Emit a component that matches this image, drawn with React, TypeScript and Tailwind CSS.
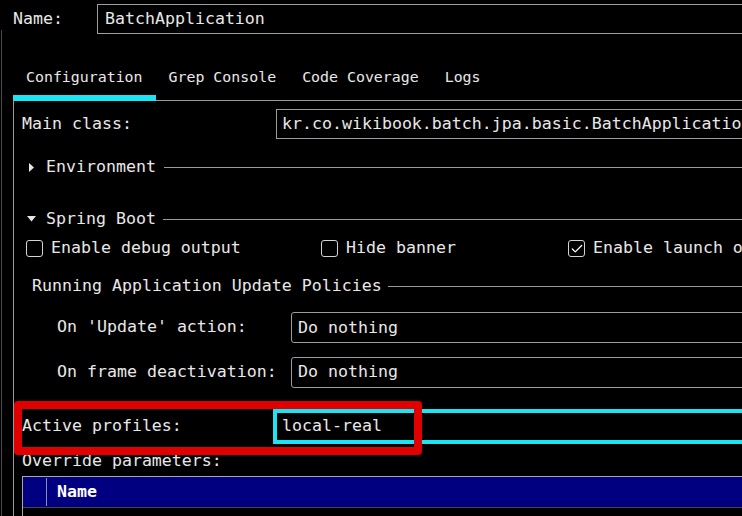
import { Check } from 'lucide-react';

const mono = "font-['DejaVu_Sans_Mono','Liberation_Mono',monospace]";

function Field({ value, className }: { value: string; className: string }) {
    return (
        <div className={`-mr-[10px] flex flex-1 items-center ${className}`}>
            <span className="whitespace-nowrap">{value}</span>
        </div>
    );
}

function CheckBox({ label, checked }: { label: string; checked?: boolean }) {
    return (
        <div className="flex items-center">
            <div className="flex h-[17px] w-[17px] items-center justify-center rounded-[3px] border-[1.5px] border-[#d4d4d4]">
                {checked && <Check className="size-[14px] text-white" strokeWidth={2.2} />}
            </div>
            <span className="ml-[8px] whitespace-nowrap">{label}</span>
        </div>
    );
}

function Section({ title, open, line = 'ml-[8px]' }: { title: string; open: boolean; line?: string }) {
    return (
        <div className="flex h-[20px] items-center pl-[8px]">
            <div className="flex w-[18px] justify-center">
                {open ? (
                    <svg width="9" height="6" viewBox="0 0 9 6">
                        <path d="M0 0H9L4.5 5.5Z" fill="#e6e6e6" />
                    </svg>
                ) : (
                    <svg width="5" height="9" viewBox="0 0 5 9">
                        <path d="M0 0V9L5 4.5Z" fill="#e6e6e6" />
                    </svg>
                )}
            </div>
            <span className="ml-[6px] whitespace-nowrap">{title}</span>
            <div className={`h-px flex-1 bg-[#9a9a9a] ${line}`} />
        </div>
    );
}

export default function App() {
    const tabs = ['Configuration', 'Grep Console', 'Code Coverage', 'Logs'];

    return (
        <div className={`relative flex h-[516px] w-[742px] flex-col overflow-hidden bg-black text-[16.6px] text-[#e8e8e8] ${mono}`}>
            {/* name */}
            <div className="flex h-[30px] shrink-0 items-start pt-[4px]">
                <div className="flex h-[30px] w-[97px] items-center pl-[13px]">Name:</div>
                <Field value="BatchApplication" className="h-[30px] border border-[#9d9d9d] pl-[7px]" />
            </div>

            <div className="ml-[1px] flex flex-1 flex-col border-l border-[#4a4a4a]">
                {/* tabs */}
                <div className="ml-[11px] flex h-[70px] shrink-0 items-end text-[14.9px]">
                    {tabs.map((t, i) => (
                        <div key={t} className="flex flex-col">
                            <div className="h-[20px] px-[13px] leading-[20px] whitespace-nowrap">{t}</div>
                            <div className={`relative mt-[8px] -mb-[1px] h-[6px] ${i === 0 ? 'bg-[#1be4f5]' : ''}`} />
                        </div>
                    ))}
                </div>

                {/* panel */}
                <div className="ml-[11px] flex flex-1 flex-col border-t border-l border-[#9a9a9a]">
                    <div className="mt-[8px] flex h-[30px] items-center pl-[8px]">
                        <div className="w-[254px] shrink-0">Main class:</div>
                        <Field
                            value="kr.co.wikibook.batch.jpa.basic.BatchApplication"
                            className="h-[30px] overflow-hidden border border-[#9d9d9d] pl-[5px]"
                        />
                    </div>

                    <div className="mt-[18px]">
                        <Section title="Environment" open={false} line="ml-[8px]" />
                    </div>
                    <div className="mt-[32px]">
                        <Section title="Spring Boot" open line="ml-[7px]" />
                    </div>

                    <div className="mt-[9px] flex h-[21px] items-center pl-[12px]">
                        <div className="w-[295px] shrink-0">
                            <CheckBox label="Enable debug output" />
                        </div>
                        <div className="w-[247px] shrink-0">
                            <CheckBox label="Hide banner" />
                        </div>
                        <CheckBox label="Enable launch optimization" checked />
                    </div>

                    <div className="mt-[17px] flex h-[20px] items-center pl-[18px]">
                        <span className="whitespace-nowrap">Running Application Update Policies</span>
                        <div className="ml-[6px] h-px flex-1 bg-[#9a9a9a]" />
                    </div>

                    <div className="mt-[16px] flex h-[31px] items-center pl-[43px]">
                        <div className="w-[234px] shrink-0">On 'Update' action:</div>
                        <Field value="Do nothing" className="h-[31px] rounded-[3px] border border-[#9d9d9d] pl-[6px] pt-[2px]" />
                    </div>
                    <div className="mt-[13px] flex h-[31px] items-center pl-[43px] pt-[1px]">
                        <div className="w-[234px] shrink-0 whitespace-nowrap">On frame deactivation:</div>
                        <Field value="Do nothing" className="h-[31px] rounded-[3px] border border-[#9d9d9d] pl-[6px] pt-[1px]" />
                    </div>

                    <div className="mt-[22px] flex h-[35px] items-center pl-[8px]">
                        <div className="w-[251px] shrink-0">Active profiles:</div>
                        <Field value="local-real" className="h-[35px] border-[4px] border-[#1be4f5] pl-[5px]" />
                    </div>

                    <div className="mt-[7px] flex h-[20px] items-center pl-[8px]">Override parameters:</div>

                    <div className="mt-[5px] ml-[8px] flex flex-1 flex-col border-l border-[#a8a8a8]">
                        <div className="flex h-[32px] border-t border-b border-t-[#a8a8a8] border-b-[#444] bg-[#000080]">
                            <div className="w-[23px] shrink-0" />
                            <div className="my-[1px] w-px bg-[#8a8ab8]" />
                            <div className="flex items-center pl-[10px] font-bold text-white">Name</div>
                        </div>
                    </div>
                </div>
            </div>

            {/* annotation */}
            <div className="absolute top-[401px] left-[14px] h-[54px] w-[408px] rounded-[4px] border-[8px] border-[#e10000]" />
        </div>
    );
}
